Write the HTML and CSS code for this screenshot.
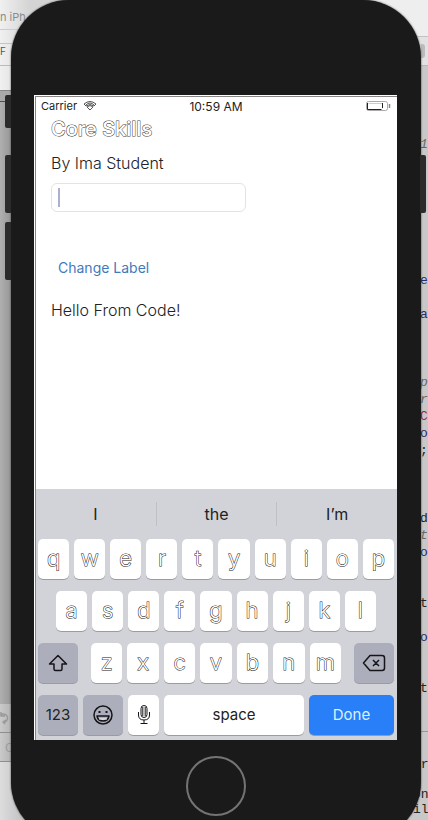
FILE: index.html
```html
<!DOCTYPE html>
<html lang="en">
<head>
<meta charset="utf-8">
<meta name="viewport" content="width=device-width, initial-scale=1">
<title>Core Skills</title>
<link rel="stylesheet" href="styles.css">
</head>
<body>
<div class="stage">
  <div class="desktop" aria-hidden="true">
    <div class="pane pane-left">
      <div class="window-title">n iPh</div>
      <div class="window-tabs"></div>
      <div class="window-tools">F</div>
      <div class="window-rule"></div>
      <div class="window-body"></div>
      <div class="window-status"><svg width="12" height="14" viewBox="0 0 12 14"><path d="M1 4a4 4 0 1 1 2 7M1 1v4h4M6 9l-3 2 2 2"/></svg></div>
      <div class="window-status">C</div>
    </div>
    <div class="pane pane-right">
      <div class="editor-top"></div>
      <div class="editor-bar"><span class="chip"></span></div>
      <pre class="code"><i>1</i>







<b>e</b>

<b>a</b>



<i>p</i>
<i>r</i>
<em>C</em>
<b>o</b>
;



d
<i>t</i>
<b>o</b>


t

<b>o</b>


t</pre>
      <pre class="console">er

on
il</pre>
    </div>
  </div>

  <div class="phone">
    <span class="side mute"></span>
    <span class="side volume-up"></span>
    <span class="side volume-down"></span>
    <span class="side power"></span>

    <main class="screen">
      <header class="status">
        <span class="carrier">Carrier
          <svg class="wifi" width="14" height="10" viewBox="0 0 14 10"><path d="M1 3Q7-2 13 3L11 5Q7 2 3 5ZM4 6Q7 3 10 6L7 9Z"/><path d="M3 4Q7 0 11 4"/></svg>
        </span>
        <time>10:59 AM</time>
        <svg class="battery" width="26" height="12" viewBox="0 0 26 12"><rect x="1.500" y="1.500" width="21" height="9" rx="2" fill="#fff" stroke="#aaa" stroke-width="1"/><path d="M24.500 4v4" stroke="#888"/><path d="M3.500 3.500h14v5" stroke="#ccc" stroke-width="1"/><path d="M2.500 3v6.500h14M17.500 3v5" stroke="#222" stroke-width="1"/></svg>
      </header>

      <section class="content">
        <h1>Core Skills</h1>
        <label for="entry">By Ima Student</label>
        <div class="field"><input id="entry" type="text"><span class="caret"></span></div>
        <button class="change" type="button">Change Label</button>
        <p>Hello From Code!</p>
      </section>

      <section class="keyboard" aria-label="Keyboard">
        <div class="suggestions"><button type="button">I</button><button type="button">the</button><button type="button">I’m</button></div>
        <div class="keys">
          <div class="row"><button>q</button><button>w</button><button>e</button><button>r</button><button>t</button><button>y</button><button>u</button><button>i</button><button>o</button><button>p</button></div>
          <div class="row inset"><button>a</button><button>s</button><button>d</button><button>f</button><button>g</button><button>h</button><button>j</button><button>k</button><button>l</button></div>
          <div class="row third">
            <button class="dark" aria-label="Shift"><svg width="20" height="18" viewBox="0 0 20 18"><path d="M10 1.500L18.500 10H14v5q0 1.500-1.500 1.500h-5Q6 16.500 6 15v-5H1.500Z"/></svg></button>
            <div class="letters"><button>z</button><button>x</button><button>c</button><button>v</button><button>b</button><button>n</button><button>m</button></div>
            <button class="dark" aria-label="Delete"><svg width="24" height="18" viewBox="0 0 24 18"><path d="M8 1.500h12q2.500 0 2.500 2.500v10q0 2.500-2.500 2.500H8L1.500 9ZM11 6l6 6M17 6l-6 6"/></svg></button>
          </div>
          <div class="row bottom">
            <button class="dark word">123</button>
            <button class="dark" aria-label="Emoji"><svg width="22" height="22" viewBox="0 0 22 22"><circle cx="11" cy="11" r="9"/><path d="M7.500 7v2M14.500 7v2" stroke-width="2"/><path d="M5 12h12q-1 5-6 5t-6-5Z"/><path d="M7 15h8" stroke="#fff" stroke-width="1"/></svg></button>
            <button class="mic" aria-label="Dictate"><svg width="14" height="22" viewBox="0 0 14 22"><rect x="4" y="1.500" width="6" height="12" rx="3"/><path d="M5.800 3v9M8.200 3v9M1.500 8v3q0 5 5.500 5t5.500-5V8M7 16v3M3.500 19.500h7"/></svg></button>
            <button class="word space">space</button>
            <button class="word done">Done</button>
          </div>
        </div>
      </section>
    </main>
    <button class="home" aria-label="Home"></button>
  </div>
</div>
</body>
</html>
```
FILE: styles.css
```css
* { box-sizing: border-box; }
body { margin: 0; font-family: Inter, "Liberation Sans", sans-serif; color: #222; }
button { border: 0; padding: 0; font: inherit; color: inherit; background: none; }
svg { display: block; fill: none; stroke: #151519; stroke-width: 1.5; stroke-linejoin: round; }

.stage { position: relative; min-height: 100vh; overflow: hidden; padding: 0 7px 0 11px; }

/* windows behind the simulator */
.desktop { position: absolute; inset: 0; display: flex; justify-content: space-between; background: #c9c9c9; }
.pane { display: flex; flex-direction: column; overflow: hidden; }
.pane-left { width: 50%; background: linear-gradient(90deg, #f0f0f0, #d4d4d4 30px); }
.window-title { height: 30px; padding-top: 8px; font-size: 11px; line-height: 18px; color: #8b8b8b; border-bottom: 1px solid #ccc; }
.window-tabs { height: 14px; border-bottom: 1px solid #c4c4c4; }
.window-tools { height: 22px; font-size: 10px; line-height: 14px; color: #555; border-bottom: 1px solid #bbb; }
.window-rule { height: 36px; border-bottom: 1px solid #4b4a68; background: linear-gradient(#0000 24px, #555a 24px, #555a 25px, #aaa 25px); }
.window-body { flex: 1; background: linear-gradient(90deg, #b0b0b0, #969696 11px); }
.window-status { height: 29px; flex: none; padding-left: 5px; font-size: 12px; line-height: 29px; color: #999; background: linear-gradient(90deg, #cacaca, #b4b4b4 11px); border-bottom: 1px solid #8e8e8e; }
.window-status svg { margin: 7px 0 0 -5px; stroke: #999; }
.pane-left::after { content: ""; height: 58px; flex: none; background: linear-gradient(90deg, #ddd, #c5c5c8 20px); }
.pane-right { width: 50%; align-items: flex-end; background: #c9c8c9; }
.editor-top { width: 100%; height: 37px; flex: none; background: #eee; border-bottom: 1px solid #c2c2c2; }
.editor-bar { width: 100%; height: 29px; flex: none; padding-top: 7px; background: #e2e2e4; border-bottom: 1px solid #b8b8b8; }
.chip { display: block; width: 4px; height: 14px; margin: 0 3px 0 auto; background: #bbb; border-radius: 0 3px 3px 0; }
pre { margin: 0; font: 13px "Liberation Mono", monospace; color: #222; }
.code { width: 8px; height: 666px; padding-top: 70px; line-height: 17px; border-bottom: 1px solid #999; }
.code i { color: #666; }
.code b { color: #2b2967; font-weight: 400; }
.code em { color: #a32b2b; font-style: normal; }
.console { width: 15px; padding-top: 25px; line-height: 15px; }

/* device */
.phone { position: relative; height: 840px; margin-bottom: -20px; padding: 95px 24px 0 23px; background: #1a1a1a; border-radius: 58px; box-shadow: 0 0 2px #333; }
.side { position: absolute; width: 6px; height: 58px; left: -6px; background: #2b2b2b; border-radius: 2px 0 0 2px; }
.mute { top: 95px; height: 33px; }
.volume-up { top: 155px; }
.volume-down { top: 222px; }
.power { top: 155px; left: auto; right: -5px; border-radius: 0 2px 2px 0; }
.home { display: block; width: 60px; height: 60px; margin: 16px auto 0; border: 2px solid #747474; border-radius: 50%; }

.screen { display: flex; flex-direction: column; height: 645px; background: #fff; border-left: 1px solid #fff; border-top: 1px solid #fff; box-shadow: inset 1px 1px #8a8585; }
.status { display: grid; grid-template-columns: 1fr auto 1fr; align-items: center; height: 20px; padding: 0 6px; font-size: 11px; }
.status time { font-size: 12px; }
.carrier { display: flex; align-items: center; gap: 6px; }
.wifi { stroke: #555; stroke-width: 1; }
.battery { justify-self: end; }

.content { flex: 1; display: flex; flex-direction: column; align-items: flex-start; padding: 0 16px; font-size: 16px; font-weight: 300; line-height: 20px; }
h1 { margin: 0; font-size: 20px; line-height: 26px; font-weight: 500; color: #fff; -webkit-text-stroke: 1px #444; paint-order: stroke fill; }
.content label { margin-top: 11px; }
.field { position: relative; width: 59%; margin-top: 10px; }
.field input { display: block; width: 100%; height: 29px; padding: 0 12px; font: inherit; background: #fff; border: 1px solid #e3e3e3; border-radius: 6px; outline: 0; }
.caret { position: absolute; left: 7px; top: 5px; width: 2px; height: 19px; background: #aab0d0; }
.change { margin: 46px 0 0 7px; font-size: 14px; font-weight: 400; line-height: 20px; color: #3f7abb; }
.content p { margin: 22px 0 0; }

/* keyboard */
.keyboard { padding: 0 3px 5px 2px; background: #d2d3d9; border-left: 1px solid #8a8585; }
.suggestions { display: grid; grid-template-columns: 1fr 1fr 1fr; margin: 0 -3px; padding: 13px 0; font-size: 16px; line-height: 24px; }
.suggestions button + button { border-left: 1px solid #bfc0c7; }
.keys { display: grid; gap: 12px; }
.row, .letters { display: flex; gap: 5px; }
.row button { flex: 1; display: grid; place-items: center; height: 40px; min-width: 0; background: #fff; border-radius: 5px; box-shadow: 0 1px #9b9ca1; font-size: 22px; font-weight: 300; line-height: 28px; padding-bottom: 3px; color: #fff; -webkit-text-stroke: 1px #222; paint-order: stroke fill; }
.inset { padding: 0 18px; }
.row.third { gap: 13px; }
.letters { flex: 250; }
.row.third > .dark { flex: 40; }
.row .dark { background: #adaebb; padding: 0; color: #222; }
.row.bottom .dark { flex: 40; }
.row.bottom .mic { flex: 31; padding: 0; }
.mic svg { stroke-width: 1; }
.row .word { font-size: 15px; font-weight: 400; padding: 0; color: #222; -webkit-text-stroke: 0; }
.row.bottom .space { flex: 140; }
.row.bottom .done { flex: 85; color: #d9f2ff; background: #297ff7; }
```
